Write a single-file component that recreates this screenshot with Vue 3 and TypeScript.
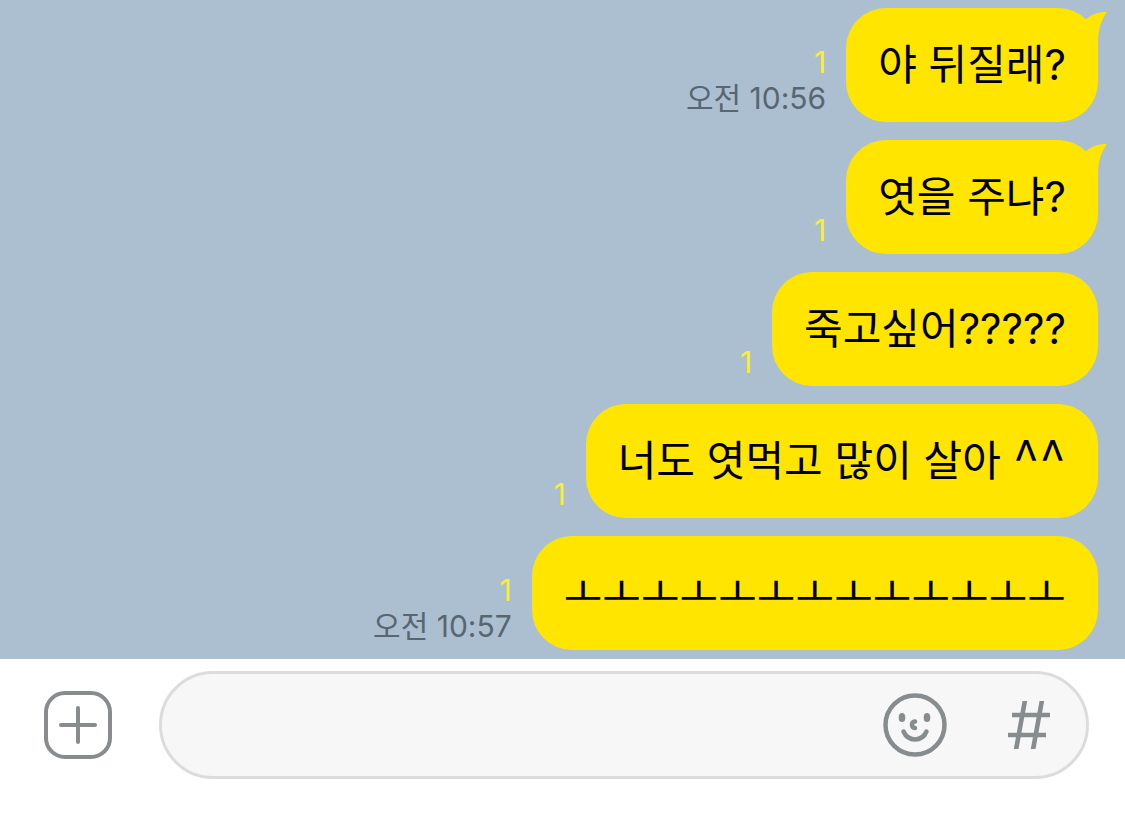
<script setup lang="ts">
import { ref } from 'vue'

interface Message {
  id: number
  text: string
  smile?: string
  unread: number
  time?: string
  tail?: boolean
}

const messages: Message[] = [
  { id: 1, text: '야 뒤질래?', unread: 1, time: '오전 10:56', tail: true },
  { id: 2, text: '엿을 주냐?', unread: 1, tail: true },
  { id: 3, text: '죽고싶어?????', unread: 1 },
  { id: 4, text: '너도 엿먹고 많이 살아 ', smile: '^^', unread: 1 },
  { id: 5, text: 'ㅗㅗㅗㅗㅗㅗㅗㅗㅗㅗㅗㅗㅗ', unread: 1, time: '오전 10:57' },
]

const draft = ref('')
</script>

<template>
  <div class="chat">
    <main class="messages">
      <div v-for="m in messages" :key="m.id" class="row">
        <div class="meta">
          <span class="unread">{{ m.unread }}</span>
          <time v-if="m.time" class="time">{{ m.time }}</time>
        </div>
        <div class="bubble">
          {{ m.text }}<span v-if="m.smile" class="emoticon">{{ m.smile }}</span>
          <svg v-if="m.tail" class="tail" viewBox="0 0 24 36" aria-hidden="true">
            <path d="M0 15 L3 7.500 C9 2 15 0 24 0 C19 7 15 16 15 30 L15 36 L6 28 Z" />
          </svg>
        </div>
      </div>
    </main>

    <form class="composer" @submit.prevent>
      <button type="button" class="icon-button" aria-label="첨부">
        <svg class="plus" viewBox="0 0 68 68" aria-hidden="true">
          <rect x="2" y="2" width="64" height="64" rx="19" />
          <path d="M34 17V51M17 34H51" />
        </svg>
      </button>
      <div class="field">
        <input v-model="draft" type="text" class="input" aria-label="메시지 입력" />
        <button type="button" class="icon-button" aria-label="이모티콘">
          <svg class="smile" viewBox="0 0 64 64" aria-hidden="true">
            <circle cx="32" cy="32" r="29.5" />
            <ellipse class="eye" cx="19" cy="24.500" rx="3.3" ry="4.6" />
            <ellipse class="eye" cx="44" cy="24.500" rx="3.3" ry="4.6" />
            <path d="M32 28.500C28 29 28 34.500 32 35" />
            <path d="M20.500 38.500C25 49 39 49 43.500 38.500" />
          </svg>
        </button>
        <button type="button" class="icon-button" aria-label="샵 검색">
          <svg class="hash" viewBox="0 0 42 48" aria-hidden="true">
            <path d="M17.200 -2L7.800 50M34.200 -2L24.800 50M4 14H42M0 34H38" />
          </svg>
        </button>
      </div>
    </form>
  </div>
</template>

<style>
body {
  margin: 0;
  background: #fff;
}
</style>

<style scoped>
.chat {
  font-family: Inter, "Noto Sans CJK KR", sans-serif;
}

.messages {
  display: flex;
  flex-direction: column;
  gap: 18px;
  padding: 8px 27px 9px;
  background: #abbfd1;
}

.row {
  display: flex;
  justify-content: flex-end;
  align-items: flex-end;
  gap: 20px;
}

.meta {
  display: flex;
  flex-direction: column;
  align-items: flex-end;
  padding-bottom: 6px;
  font-size: 30px;
  line-height: 36px;
  white-space: nowrap;
}

.unread {
  color: #f9ee35;
}

.time {
  color: #586672;
}

.bubble {
  position: relative;
  padding: 27px 32px;
  border-radius: 40px;
  background: #ffe500;
  color: #000;
  font-size: 42px;
  line-height: 60px;
}

.emoticon {
  font-family: "Noto Sans CJK KR", sans-serif;
  font-size: 48px;
  line-height: 48px;
}

.tail {
  position: absolute;
  top: 4px;
  right: -9px;
  width: 24px;
  height: 36px;
  fill: #ffe500;
}

.composer {
  display: flex;
  align-items: center;
  gap: 47px;
  padding: 12px 36px 35px 44px;
  background: #fff;
}

.icon-button {
  display: flex;
  flex: none;
  padding: 0;
  border: 0;
  background: none;
  color: #878c8f;
  cursor: pointer;
}

.icon-button svg {
  fill: none;
  stroke: currentColor;
  stroke-width: 4;
}

.plus {
  width: 68px;
  height: 68px;
  stroke-linecap: round;
}

.icon-button .smile {
  width: 64px;
  height: 64px;
  stroke-linecap: round;
  stroke-width: 4.5;
}

.icon-button svg .eye {
  fill: currentColor;
  stroke: none;
}

.icon-button .hash {
  width: 42px;
  height: 48px;
  stroke-width: 4.6;
}

.field {
  display: flex;
  flex: 1;
  align-items: center;
  gap: 61px;
  min-width: 0;
  height: 102px;
  padding: 0 36px 0 40px;
  border: 3px solid #dcdcdd;
  border-radius: 54px;
  background: #f7f7f7;
}

.input {
  flex: 1;
  min-width: 0;
  height: 60px;
  padding: 0;
  border: 0;
  outline: 0;
  background: transparent;
  font: inherit;
  font-size: 42px;
}
</style>
